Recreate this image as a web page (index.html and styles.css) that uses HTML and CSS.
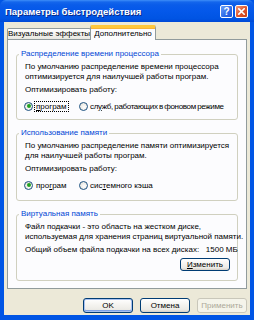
FILE: index.html
```html
<!DOCTYPE html>
<html lang="ru">
<head>
<meta charset="utf-8">
<title>Параметры быстродействия</title>
<link rel="stylesheet" href="styles.css">
</head>
<body>
<div class="window">
  <div class="titlebar">
    <span class="title">Параметры быстродействия</span>
    <div class="tb-buttons">
      <span class="tb-btn help">?</span>
      <span class="tb-btn close"><svg width="7" height="7" viewBox="0 0 7 7"><path d="M0.8 0.8 L6.2 6.2 M6.2 0.8 L0.8 6.2" stroke="#fff" stroke-width="1.6" stroke-linecap="square"/></svg></span>
    </div>
  </div>
  <div class="client">
    <div class="tabs">
      <div class="tab">Визуальные эффекты</div>
      <div class="tab active">Дополнительно</div>
    </div>
    <div class="panel">
      <fieldset class="group g1">
        <legend>Распределение времени процессора</legend>
        <p class="line">По умолчанию распределение времени процессора</p>
        <p class="line">оптимизируется для наилучшей работы програм.</p>
        <p class="line opt">Оптимизировать работу:</p>
        <div class="radios">
          <label class="radio first"><span class="dot checked"></span><span class="focus"><u>п</u>рограм</span></label>
          <label class="radio"><span class="dot"></span><span class="tight">сл<u>у</u>жб, работающих в фоновом режиме</span></label>
        </div>
      </fieldset>
      <fieldset class="group g2">
        <legend>Использование памяти</legend>
        <p class="line">По умолчанию распределение памяти оптимизируется</p>
        <p class="line">для наилучшей работы програм.</p>
        <p class="line opt">Оптимизировать работу:</p>
        <div class="radios">
          <label class="radio first"><span class="dot checked"></span><span class="plain">про<u>г</u>рам</span></label>
          <label class="radio"><span class="dot"></span><span>сис<u>т</u>емного кэша</span></label>
        </div>
      </fieldset>
      <fieldset class="group g3">
        <legend>Виртуальная память</legend>
        <p class="line">Файл подкачки - это область на жестком диске,</p>
        <p class="line">используемая для хранения страниц виртуальной памяти.</p>
        <p class="line opt">Общий объем файла подкачки на всех дисках:&nbsp;&nbsp; 1500 МБ</p>
        <div class="row-right">
          <button class="btn change"><u>И</u>зменить</button>
        </div>
      </fieldset>
    </div>
    <div class="buttons">
      <button class="btn default">OK</button>
      <button class="btn">Отмена</button>
      <button class="btn disabled">Применить</button>
    </div>
  </div>
</div>
</body>
</html>
```
FILE: styles.css
```css
html, body {
  margin: 0;
  padding: 0;
}
body {
  width: 254px;
  height: 320px;
  overflow: hidden;
  font-family: "Liberation Sans", Arial, sans-serif;
  font-size: 8px;
  color: #000;
}
.window {
  width: 254px;
  height: 320px;
  box-sizing: border-box;
  background: #0055E5;
  padding: 0 4px 5px 4px;
  display: flex;
  flex-direction: column;
}
.titlebar {
  height: 22px;
  margin: 0 -4px;
  padding: 0 6px 0 5px;
  display: flex;
  align-items: center;
  justify-content: space-between;
  background: linear-gradient(#3E8EF8 0px, #1466EC 2px, #0A5CE9 5px, #0458EA 50%, #0054E3 85%, #0049D6 100%);
  border-radius: 6px 6px 0 0;
}
.title {
  color: #fff;
  font-weight: bold;
  font-size: 9.5px;
  text-shadow: 1px 1px 0 #0A2A8A;
  padding-top: 1px;
}
.tb-buttons {
  display: flex;
  gap: 2px;
  padding-top: 1px;
}
.tb-btn {
  width: 13px;
  height: 13px;
  box-sizing: border-box;
  border: 1px solid #fff;
  border-radius: 2px;
  display: flex;
  align-items: center;
  justify-content: center;
  color: #fff;
  font-weight: bold;
  font-size: 10px;
  line-height: 1;
}
.help {
  background: linear-gradient(135deg, #6FA0F8, #2B6AE8 60%, #1E56D8);
}
.close {
  background: linear-gradient(135deg, #F29A78, #E0552C 55%, #C8401C);
}
.client {
  flex: 1;
  background: #ECE9D8;
  padding: 3px 3px 0 3px;
  display: flex;
  flex-direction: column;
}
.tabs {
  display: flex;
  align-items: flex-end;
  height: 15px;
  margin-bottom: -1px;
  position: relative;
  z-index: 1;
}
.tab {
  box-sizing: border-box;
  width: 84px;
  height: 11px;
  margin-bottom: 1px;
  border: 1px solid #919B9C;
  border-bottom: none;
  border-radius: 2px 2px 0 0;
  background: linear-gradient(#FFFFFF, #F3F2EE 60%, #E8E7E0);
  text-align: center;
  line-height: 10px;
  white-space: nowrap;
}
.tab.active {
  width: 66px;
  height: 15px;
  margin-bottom: 0;
  margin-left: -1px;
  background: #FCFCFE;
  border-top: 3px solid #FFC83C;
  box-shadow: inset 0 1px 0 #F8B33A;
  line-height: 11px;
}
.panel {
  height: 250px;
  box-sizing: border-box;
  border: 1px solid #919B9C;
  background: #FCFCFE;
  padding: 0 8px;
}
.group {
  margin: 9px 0 0 0;
  padding: 3px 8px 8px 8px;
  border: 1px solid #D0D0BF;
  border-radius: 3px;
  min-width: 0;
}
.g2 { margin-top: 8px; padding-bottom: 10px; }
.g3 { margin-top: 8px; padding-bottom: 9px; }
legend {
  color: #0046D5;
  padding: 0 2px;
  margin-left: -6px;
  line-height: 10px;
}
.line {
  margin: 0;
  line-height: 10px;
  white-space: nowrap;
}
.opt {
  margin-top: 3px;
}
.radios {
  display: flex;
  margin-top: 6px;
  height: 10px;
  align-items: center;
}
.radio {
  display: flex;
  align-items: center;
  white-space: nowrap;
  margin-left: -1px;
  flex: none;
}
.radio.first {
  width: 56px;
}
.tight {
  letter-spacing: -0.35px;
  word-spacing: -0.5px;
}
.dot {
  width: 9px;
  height: 9px;
  box-sizing: border-box;
  border: 1px solid #1C5180;
  border-radius: 50%;
  background: radial-gradient(circle at 60% 60%, #FFFFFF, #E6E4DC 80%);
  margin-right: 2px;
  display: flex;
  align-items: center;
  justify-content: center;
  flex: none;
}
.dot.checked::after {
  content: "";
  width: 4px;
  height: 4px;
  border-radius: 50%;
  background: #21A121;
}
.focus {
  outline: 1px dotted #000;
  outline-offset: 0;
  padding: 0 1px;
}
.plain {
  padding: 0 1px;
}
.row-right {
  display: flex;
  justify-content: flex-end;
  margin-top: 3px;
  margin-right: -1px;
}
.btn {
  font-family: "Liberation Sans", Arial, sans-serif;
  font-size: 8px;
  color: #000;
  width: 50px;
  height: 15px;
  padding: 0;
  box-sizing: border-box;
  border: 1px solid #003C74;
  border-radius: 3px;
  background: linear-gradient(#FFFFFF, #F3F2EE 50%, #ECEBE6 80%, #D6D0C5);
  line-height: 13px;
  text-align: center;
}
.btn.change {
  width: 50px;
  height: 13px;
  line-height: 11px;
}
.buttons {
  display: flex;
  justify-content: flex-end;
  gap: 7px;
  margin-top: 9px;
}
.btn.default {
  box-shadow: inset 0 0 0 1px #A9C2F0, inset 0 -1px 0 1px #7EA2E6;
}
.btn.disabled {
  border-color: #C9C7BA;
  background: #F5F4EA;
  color: #ACA899;
}
```
